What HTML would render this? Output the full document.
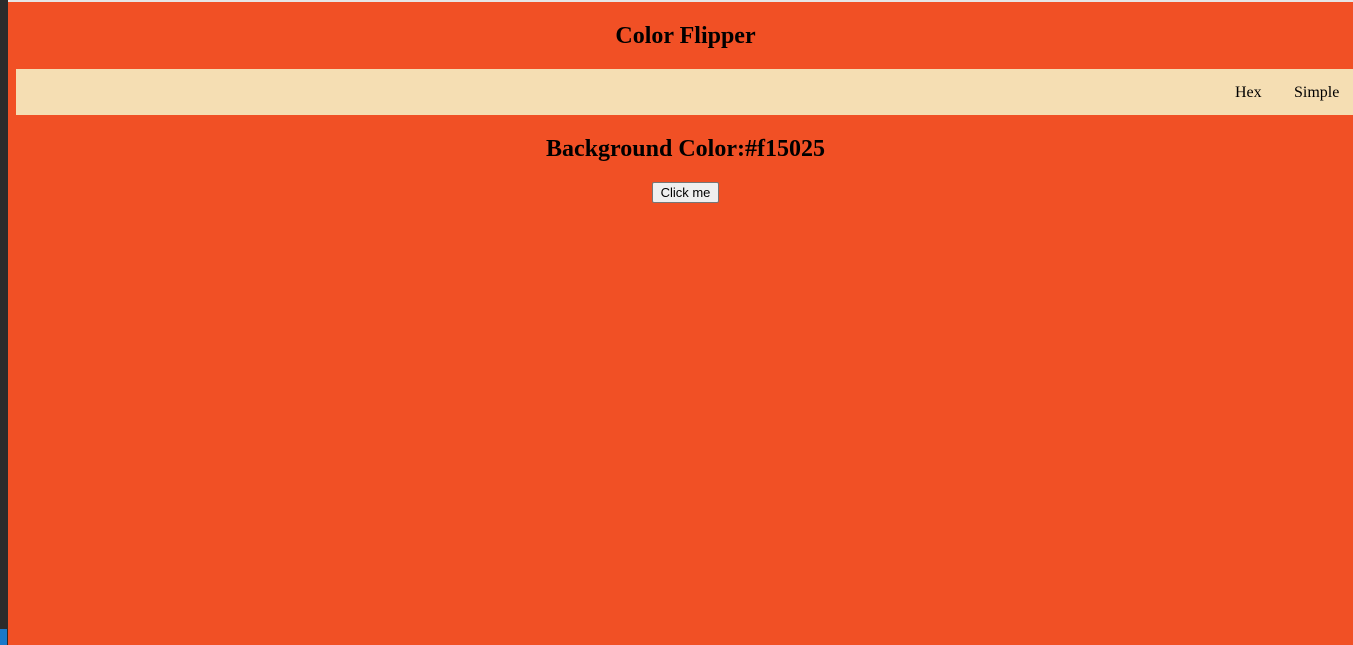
<!DOCTYPE html>
<html><head><meta charset="utf-8"><style>
html,body{margin:0;padding:0;width:1353px;height:645px;overflow:hidden;background:#f15025;font-family:"Liberation Serif",serif;position:relative}
.side{position:absolute;left:0;top:0;width:8px;height:645px;background:#2b2b2b}
.blue{position:absolute;left:0;top:629px;width:7px;height:16px;background:#1a78c8}
.topline{position:absolute;left:8px;top:0;width:1345px;height:2px;background:#e6e6e6}
h1{position:absolute;left:8px;width:1355px;top:22px;margin:0;text-align:center;font-size:24px;font-weight:bold;line-height:28px}
nav{position:absolute;left:16px;top:69px;width:1337px;height:46px;background:#f5deb3}
nav span{position:absolute;top:15px;font-size:16px;line-height:18px}
h2{position:absolute;left:8px;width:1355px;top:135px;margin:0;text-align:center;font-size:24px;font-weight:bold;line-height:28px}
button{position:absolute;left:652px;top:182px;width:67px;height:21px;font-family:"Liberation Sans",sans-serif;font-size:13px;padding:0;background:#efefef;border:1px solid #767676;border-radius:2px;color:#000}
</style></head><body>
<div class="side"></div><div class="blue"></div><div class="topline"></div>
<h1>Color Flipper</h1>
<nav><span style="left:1219px">Hex</span><span style="left:1278px">Simple</span></nav>
<h2>Background Color:#f15025</h2>
<button>Click me</button>
</body></html>
